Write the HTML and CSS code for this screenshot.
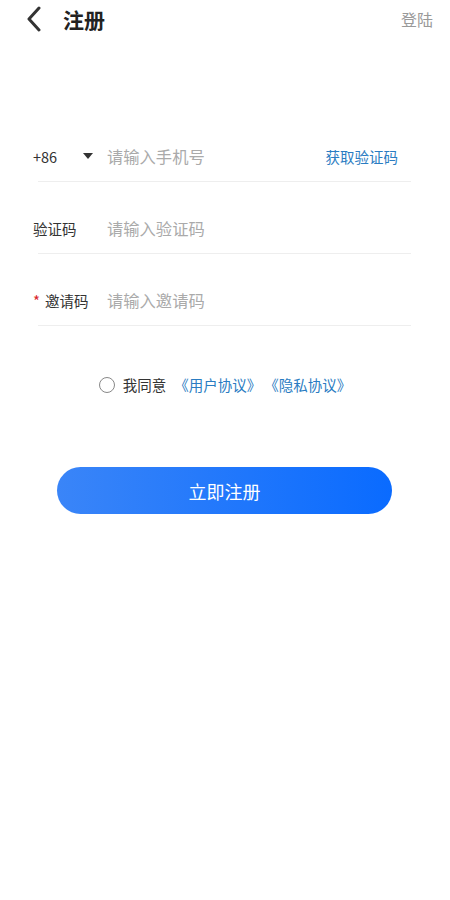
FILE: index.html
```html
<!DOCTYPE html>
<html lang="zh-CN">
<head>
    <meta charset="UTF-8">
    <meta name="viewport" content="width=device-width, initial-scale=1.0">
    <title>注册</title>
    <link rel="stylesheet" href="styles.css">
</head>
<body>
    <!-- 顶部导航 -->
    <div class="header">
        <div class="header-left">
            <svg class="back-icon" width="18" height="26" viewBox="0 0 18 26">
                <path d="M14 2 L4 13 L14 24" fill="none" stroke="#333" stroke-width="3" stroke-linecap="round" stroke-linejoin="round"/>
            </svg>
            <span class="title">注册</span>
        </div>
        <span class="login-link">登陆</span>
    </div>

    <!-- 注册表单 -->
    <div class="form">
        <div class="form-row">
            <div class="label phone-prefix">
                <span>+86</span>
                <span class="arrow"></span>
            </div>
            <span class="placeholder">请输入手机号</span>
            <span class="code-btn">获取验证码</span>
        </div>
        <div class="form-row">
            <div class="label">验证码</div>
            <span class="placeholder">请输入验证码</span>
        </div>
        <div class="form-row">
            <div class="label"><span class="required">*</span>邀请码</div>
            <span class="placeholder">请输入邀请码</span>
        </div>
    </div>

    <div class="agreement">
        <span class="radio"></span>
        <span class="agree-text">我同意</span>
        <span class="agree-link">《用户协议》</span>
        <span class="agree-link">《隐私协议》</span>
    </div>

    <div class="btn-wrap">
        <button class="submit-btn">立即注册</button>
    </div>
</body>
</html>
```

FILE: styles.css
```css
body {
    margin: 0;
    padding: 0;
    background: #fff;
    font-family: "Noto Sans CJK SC", "Noto Sans", sans-serif;
    color: #333;
}

.header {
    display: flex;
    justify-content: space-between;
    align-items: center;
    height: 38px;
    padding: 0 17px 0 25px;
}

.header-left {
    display: flex;
    align-items: center;
}

.back-icon {
    display: block;
}

.title {
    margin-left: 20px;
    font-size: 21px;
    font-weight: bold;
    color: #222;
}

.login-link {
    font-size: 16px;
    color: #999;
}

.form {
    margin-top: 72px;
}

.form-row {
    display: flex;
    align-items: center;
    height: 52px;
    padding-top: 20px;
    margin: 0 39px 0 33px;
    position: relative;
}

.form-row::after {
    content: "";
    position: absolute;
    left: 5px;
    right: 0;
    bottom: 0;
    height: 1px;
    background: #eeeeee;
}

.label {
    width: 74px;
    font-size: 14.5px;
    color: #333;
    display: flex;
    align-items: center;
}

.arrow {
    margin-left: 26px;
    width: 0;
    height: 0;
    border-left: 5px solid transparent;
    border-right: 5px solid transparent;
    border-top: 6px solid #333;
}

.required {
    color: #d9262c;
    margin-right: 5px;
    font-size: 15px;
}

.placeholder {
    flex: 1;
    font-size: 16.3px;
    color: #aaa;
}

.code-btn {
    font-size: 14.5px;
    color: #2a7cc2;
    margin-right: 13px;
}

.agreement {
    display: flex;
    align-items: center;
    justify-content: center;
    margin-top: 48px;
    font-size: 14.5px;
}

.radio {
    width: 14px;
    height: 14px;
    border: 1.5px solid #888;
    border-radius: 50%;
    margin-right: 8px;
}

.agree-text {
    color: #333;
    margin-right: 5px;
}

.agree-link {
    color: #2a7cc2;
    margin-left: 3px;
}

.btn-wrap {
    padding: 0 58px 0 57px;
    margin-top: 72px;
}

.submit-btn {
    display: block;
    width: 100%;
    height: 47px;
    border: none;
    border-radius: 24px;
    background: linear-gradient(to right, #3a85f8, #0a6bff);
    color: #fff;
    font-size: 18px;
    font-family: "Noto Sans CJK SC", "Noto Sans", sans-serif;
    cursor: pointer;
}
```
